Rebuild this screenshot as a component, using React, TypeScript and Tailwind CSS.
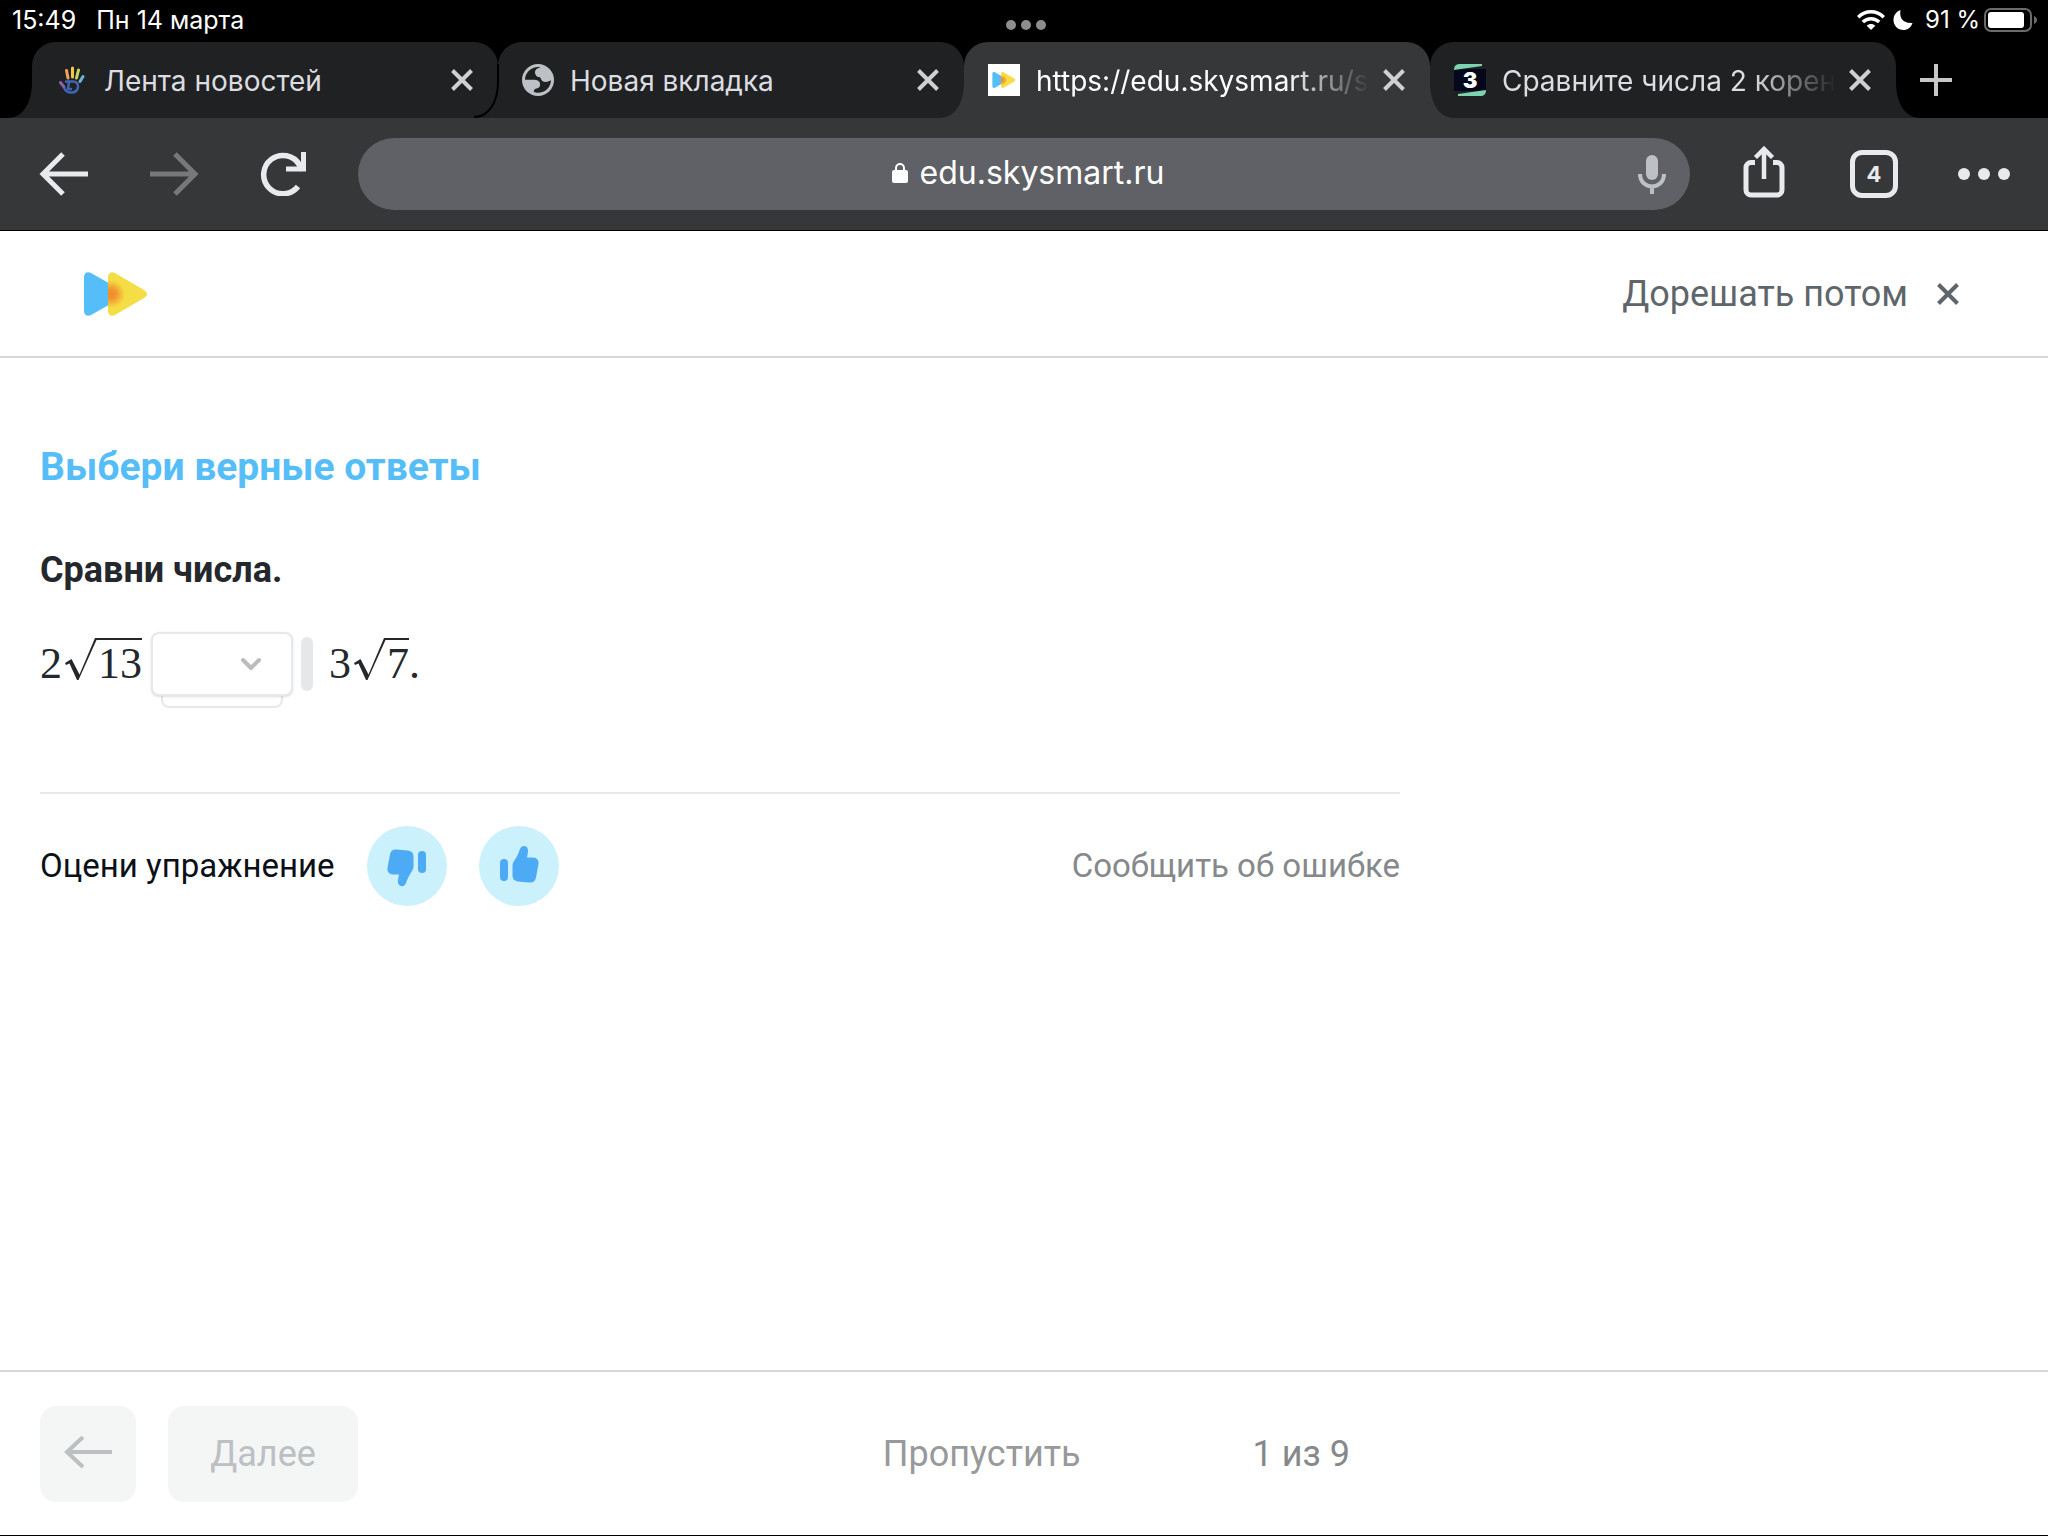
import { useState } from 'react';
import type { ReactNode } from 'react';

type Tab = {
    title: string;
    icon: ReactNode;
    fade?: boolean;
};

// Play logo, two overlapping rounded triangles
function SkyLogo({ className, id }: { className: string; id: string }) {
    return (
        <svg className={className} viewBox="0 0 64 44" aria-hidden="true">
            <defs>
                <radialGradient id={id} gradientUnits="userSpaceOnUse" cx="27" cy="22" r="14">
                    <stop offset="0" stopColor="#f08a2c" />
                    <stop offset="0.35" stopColor="#f2952f" />
                    <stop offset="1" stopColor="#f5dd45" />
                </radialGradient>
            </defs>
            <path d="M0 5C0 1 3.500-1 7 1L38 18.500C41 20 41 24 38 25.500L7 43C3.500 45 0 43 0 39Z" fill="#55bdf8" />
            <path d="M24 5C24 1 27.500-1 31 1L60 18C64 20.500 64 23.500 60 26L31 43C27.500 45 24 43 24 39Z" fill={`url(#${id})`} />
        </svg>
    );
}

function HandIcon() {
    return (
        <svg className="size-8 shrink-0" viewBox="0 0 32 32" fill="none" strokeLinecap="round" aria-hidden="true">
            <path d="M12 14L10.500 6.500" stroke="#f0a35a" strokeWidth="3" />
            <path d="M16.500 13L16.500 4" stroke="#f3c74b" strokeWidth="3" />
            <path d="M20.500 14L22.500 6" stroke="#c6d860" strokeWidth="3" />
            <path d="M24 17.500L27 12.500" stroke="#6fb4d8" strokeWidth="3" />
            <path d="M8 23L4.500 18.500" stroke="#8d5fa8" strokeWidth="3" />
            <path d="M10 17.500H17C20.500 17.500 22.500 20 22 23C21.500 26.500 19 28.500 15.500 28.500C12 28.500 9.500 27 8.500 24.500" stroke="#3f66b5" strokeWidth="2.500" />
            <path d="M13 18L12 25H15" stroke="#3f66b5" strokeWidth="2.500" />
        </svg>
    );
}

function GlobeIcon() {
    return (
        <svg className="size-8 shrink-0" viewBox="0 0 32 32" aria-hidden="true">
            <circle cx="16" cy="16" r="16" fill="#bdc1c6" />
            <path d="M18.500 3.300C17 4 14.500 4.500 13.500 6.500C12.500 8.500 13 10 14.500 12C16 13.500 18.500 12.500 19 14.500C19.500 17 21.500 18.200 24.500 17.800C26.500 17.600 27.500 16.500 29 16C29 23.200 23.200 28.800 16 28.800C14.500 28.800 13 28.500 12 28C11.500 26.500 12 25 14.500 24.500C17 24 18.500 22.500 18 19.500C17.500 16.500 14.500 15.500 11.500 15.800H3C3 8.800 9 3 16 3C17 3 17.800 3.100 18.500 3.300Z" fill="#202123" />
            <path d="M14.500 5.500C13 7 13 10 15 12C17 13.500 18.500 12.500 19 14.500C19.500 16.500 21.500 17.500 24.500 17.500C26.500 17.500 28 16.500 29 16C29 10 25 5 19.500 3.500Z" fill="#bdc1c6" />
        </svg>
    );
}

function ZnanijaIcon() {
    return (
        <span className="relative flex size-8 shrink-0 items-center justify-center">
            <svg className="absolute inset-0 size-8" viewBox="0 0 32 32" aria-hidden="true">
                <path d="M0 5H32V27H0Z" fill="#05081a" />
                <path d="M0 6C0 2 2 0 6 0H28V2L0 6Z" fill="#7cd3b0" />
                <path d="M32 26C32 30 30 32 26 32H4V30L32 26Z" fill="#7cd3b0" />
            </svg>
            <span className="relative text-[22px] leading-none font-black text-white">3</span>
        </span>
    );
}

function CloseIcon() {
    return (
        <svg className="size-6" viewBox="0 0 24 24" fill="none" stroke="currentColor" strokeWidth="4" aria-hidden="true">
            <path d="M2.500 2.500L21.500 21.500M21.500 2.500L2.500 21.500" />
        </svg>
    );
}

// Concave foot that joins a tab to the toolbar
function Foot({ side, className }: { side: 'left' | 'right'; className: string }) {
    return (
        <svg
            className={`absolute bottom-0 h-9 w-6 overflow-visible ${side === 'left' ? '-left-6' : '-right-6 -scale-x-100'} ${className}`}
            viewBox="0 0 24 36"
            aria-hidden="true"
        >
            <path d="M24 0C24 22 14 36 0 36H24Z" stroke="none" />
            <path d="M24 -18V0C24 21 14 35 0 35" fill="none" strokeWidth="2" />
        </svg>
    );
}

const tabs: Tab[] = [
    { title: 'Лента новостей', icon: <HandIcon /> },
    { title: 'Новая вкладка', icon: <GlobeIcon /> },
    {
        title: 'https://edu.skysmart.ru/s',
        icon: (
            <span className="flex size-8 shrink-0 items-center justify-center bg-white">
                <SkyLogo id="tab-logo" className="h-4 w-6" />
            </span>
        ),
        fade: true,
    },
    { title: 'Сравните числа 2 корен', icon: <ZnanijaIcon />, fade: true },
];

function StatusBar() {
    return (
        <div className="grid h-[42px] grid-cols-3 items-start pr-2 pl-3 text-2xl leading-10 text-white">
            <div className="flex gap-5 text-[25px] leading-10">
                <span>15:49</span>
                <span>Пн 14 марта</span>
            </div>
            <div className="flex justify-center gap-[5px] pt-5">
                <span className="size-2.5 rounded-full bg-[#8e8e8e]" />
                <span className="size-2.5 rounded-full bg-[#8e8e8e]" />
                <span className="size-2.5 rounded-full bg-[#8e8e8e]" />
            </div>
            <div className="flex h-10 items-center justify-end">
                <svg className="mr-2 h-5 w-7" viewBox="0 0 28 20" fill="none" stroke="#fff" strokeWidth="3.500" aria-label="Wi-Fi">
                    <path d="M1.200 7.200C8.500 0 19.500 0 26.800 7.200" />
                    <path d="M5.800 12C10.500 7.500 17.500 7.500 22.200 12" />
                    <path d="M14 20L9.700 15.700C12 13.500 16 13.500 18.300 15.700Z" fill="#fff" stroke="none" />
                </svg>
                <svg className="mr-3 size-5" viewBox="0 0 20 20" fill="#fff" aria-label="Не беспокоить">
                    <path d="M7.500 0C6.500 6 8 13.500 19.500 13C18 17.500 14.500 20 10.500 20C5 20 0.500 16 0.500 10C0.500 5.500 3 1.500 7.500 0Z" />
                </svg>
                <span>91 %</span>
                <svg className="ml-1 h-6 w-14" viewBox="0 0 56 24" aria-hidden="true">
                    <rect x="1" y="1" width="46" height="22" rx="6" fill="none" stroke="#6b6b6b" strokeWidth="2" />
                    <rect x="4" y="4" width="36" height="16" rx="3" fill="#fff" />
                    <path d="M50 8C54 9.500 54 14.500 50 16Z" fill="#6b6b6b" />
                </svg>
            </div>
        </div>
    );
}

function TabStrip() {
    const [active, setActive] = useState<number>(2);

    return (
        <div className="flex h-[76px] pl-8">
            {tabs.map((tab, i) => {
                const isActive = i === active;
                return (
                    <div
                        key={tab.title}
                        className={`relative flex min-w-0 flex-1 items-center gap-3 rounded-t-3xl px-6
                            ${isActive ? 'z-10 bg-[#363739] text-white' : 'bg-[#202123] text-[#dcdde0]'}`}
                    >
                        {(isActive || i < active) && (
                            <Foot
                                side="left"
                                className={isActive ? 'fill-[#363739]' : i === 0 ? 'fill-[#202123]' : 'fill-[#202123] stroke-black'}
                            />
                        )}
                        {(isActive || i > active) && (
                            <Foot side="right" className={isActive ? 'fill-[#363739]' : 'fill-[#202123]'} />
                        )}
                        <button
                            type="button"
                            onClick={() => setActive(i)}
                            className="flex min-w-0 flex-1 items-center gap-4 text-left text-[28px] leading-10"
                        >
                            {tab.icon}
                            <span
                                className={`flex-1 pt-0.5 whitespace-nowrap
                                    ${tab.fade ? 'mask-r-from-75% mask-r-to-100%' : ''}`}
                            >
                                {tab.title}
                            </span>
                        </button>
                        <button type="button" aria-label="Закрыть вкладку" className="text-[#cfd0d2]">
                            <CloseIcon />
                        </button>
                    </div>
                );
            })}
            <div className="flex w-[152px] shrink-0 items-center pl-6">
                <button type="button" aria-label="Новая вкладка">
                    <svg className="size-8" viewBox="0 0 32 32" stroke="#c6c7c9" strokeWidth="4" aria-hidden="true">
                        <path d="M16 0V32M0 16H32" />
                    </svg>
                </button>
            </div>
        </div>
    );
}

function Toolbar() {
    return (
        <div className="flex h-28 items-center bg-[#363739] px-9 text-[#e8eaed]">
            <div className="flex w-[322px] shrink-0 items-center gap-[54px]">
                <button type="button" aria-label="Назад">
                    <svg className="h-11 w-14" viewBox="0 0 56 44" fill="none" stroke="currentColor" strokeWidth="5" aria-hidden="true">
                        <path d="M52 22H8M27 2L7 22L27 42" />
                    </svg>
                </button>
                <button type="button" aria-label="Вперёд" disabled className="text-[#77787a]">
                    <svg className="h-11 w-14" viewBox="0 0 56 44" fill="none" stroke="currentColor" strokeWidth="5" aria-hidden="true">
                        <path d="M4 22H48M29 2L49 22L29 42" />
                    </svg>
                </button>
                <button type="button" aria-label="Обновить">
                    <svg className="h-11 w-[52px]" viewBox="0 0 52 44" fill="none" stroke="currentColor" strokeWidth="5.500" aria-hidden="true">
                        <path d="M42 34.500A19.200 19.200 0 1 1 43.500 13L46.500 18" />
                        <path d="M47.500 0V17H30" strokeWidth="5" />
                    </svg>
                </button>
            </div>
            <div className="relative flex h-18 min-w-0 flex-1 items-center justify-center rounded-full bg-[#5f6166]">
                <button type="button" className="flex items-center gap-3 pb-0.5 pl-2 text-[32px] leading-10 text-white">
                    <svg className="h-5 w-4" viewBox="0 0 16 20" aria-hidden="true">
                        <path d="M4 9V5A4 4 0 0 1 12 5V9" fill="none" stroke="#fff" strokeWidth="2" />
                        <rect x="0" y="7" width="16" height="13" rx="2" fill="#fff" />
                    </svg>
                    edu.skysmart.ru
                </button>
                <button type="button" aria-label="Голосовой поиск" className="absolute right-6">
                    <svg className="h-10 w-7" viewBox="0 0 28 40" fill="none" aria-hidden="true">
                        <rect x="8" y="1" width="12" height="25" rx="6" fill="#bdc1c6" />
                        <path d="M2 20C2 36.500 26 36.500 26 20M14 32V40" stroke="#bdc1c6" strokeWidth="4" />
                    </svg>
                </button>
            </div>
            <div className="flex w-[322px] shrink-0 items-center justify-end gap-[60px]">
                <button type="button" aria-label="Поделиться">
                    <svg className="h-14 w-[50px]" viewBox="0 3 50 56" fill="none" stroke="currentColor" strokeWidth="5" aria-hidden="true">
                        <path d="M15 19.500H11A5 5 0 0 0 6 24.500V47A5 5 0 0 0 11 52H37A5 5 0 0 0 42 47V24.500A5 5 0 0 0 37 19.500H33" />
                        <path d="M24 36V6M15.500 14.500L24 6L32.500 14.500" strokeWidth="4.500" />
                    </svg>
                </button>
                <button
                    type="button"
                    aria-label="Открытые вкладки"
                    className="flex size-12 items-center justify-center rounded-xl border-[5px] border-[#e8eaed] text-[22px] font-bold"
                >
                    4
                </button>
                <button type="button" aria-label="Меню" className="flex gap-2 pr-0.5">
                    <span className="size-3 rounded-full bg-[#e8eaed]" />
                    <span className="size-3 rounded-full bg-[#e8eaed]" />
                    <span className="size-3 rounded-full bg-[#e8eaed]" />
                </button>
            </div>
        </div>
    );
}

// Radical sign with the line over its content
function Root({ children }: { children: string }) {
    return (
        <span className="flex items-start pb-[3px]">
            <svg className="h-11 w-9" viewBox="0 0 36 44" aria-hidden="true">
                <path d="M3 26L9.500 22L17.500 37.500L33 1H36V3H34.500L16.500 43H15L7.500 26.500L4 28Z" fill="#24282c" />
            </svg>
            <span className="mt-px border-t-2 border-[#24282c] leading-12">{children}</span>
        </span>
    );
}

function ThumbUp({ className }: { className?: string }) {
    return (
        <svg className={`h-11 w-10 ${className ?? ''}`} viewBox="0 0 40 44" fill="#4dabf5" aria-hidden="true">
            <rect x="1" y="15" width="8" height="22" rx="4" />
            <path d="M21 5C22.500 0 30 1 29 8L28 13.500H34C38 13.500 40 16.500 39.500 20L37 33.500C36.500 37 34 39 30 38.500L19 37.500C15.500 37 13.500 35 13.500 32V22C13.500 20 14 18.500 15 17C17.500 13.500 19.500 9.500 21 5Z" />
        </svg>
    );
}

function Exercise() {
    const [answer, setAnswer] = useState<string>('');

    return (
        <main className="flex-1 px-10 pt-[85px] text-[#24282c]">
            <div className="max-w-[1360px]">
                <h1 className="text-[39px] leading-12 font-bold text-[#55bdf8]">Выбери верные ответы</h1>
                <h2 className="mt-[55px] text-4xl leading-12 font-bold">Сравни числа.</h2>

                {/* Comparison row */}
                <div className="mt-[30px] flex h-20 items-center font-['Liberation_Serif',serif] text-[44px] leading-12">
                    <span>2</span>
                    <Root>13</Root>
                    <div className="relative ml-[9px] h-16 w-[142px]">
                        <span className="absolute inset-x-2.5 top-10 -bottom-3 rounded-lg border-2 border-[#e7e8e9]" />
                        <select
                            aria-label="Знак сравнения"
                            value={answer}
                            onChange={(e) => setAnswer(e.target.value)}
                            className="relative block h-full w-full appearance-none rounded-lg border-2 border-[#e7e8e9] bg-white px-5 text-3xl shadow-sm"
                        >
                            <option value=""></option>
                            <option value="lt">&lt;</option>
                            <option value="gt">&gt;</option>
                            <option value="eq">=</option>
                        </select>
                        <svg
                            className="pointer-events-none absolute top-6 right-8 h-4 w-5"
                            viewBox="0 0 20 16"
                            fill="none"
                            stroke="#bcbcbc"
                            strokeWidth="4"
                            strokeLinecap="round"
                            strokeLinejoin="round"
                            aria-hidden="true"
                        >
                            <path d="M2 4L10 12L18 4" />
                        </svg>
                    </div>
                    <span className="mr-4 ml-2 h-[54px] w-3 rounded-full bg-[#e5e7e9]" />
                    <span>3</span>
                    <Root>7</Root>
                    <span>.</span>
                </div>

                {/* Feedback */}
                <div className="mt-22 flex items-center justify-between border-t-2 border-[#e7e8e9] pt-8 text-[33px] leading-10">
                    <div className="flex items-center gap-8">
                        <span className="text-[#0b1117]">Оцени упражнение</span>
                        <button type="button" aria-label="Не нравится" className="flex size-20 items-center justify-center rounded-full bg-[#cbf1fc]">
                            <ThumbUp className="rotate-180" />
                        </button>
                        <button type="button" aria-label="Нравится" className="flex size-20 items-center justify-center rounded-full bg-[#cbf1fc]">
                            <ThumbUp />
                        </button>
                    </div>
                    <a href="#report" className="text-[#85898b]">Сообщить об ошибке</a>
                </div>
            </div>
        </main>
    );
}

function App() {
    return (
        <div className="flex min-h-screen flex-col bg-white font-[Roboto,sans-serif]">
            <header className="border-b border-black bg-black font-[Inter,sans-serif]">
                <StatusBar />
                <TabStrip />
                <Toolbar />
            </header>

            <div className="flex h-[127px] shrink-0 items-center justify-between border-b-2 border-[#d6d7d7] pr-[88px] pl-[84px]">
                <a href="#home" aria-label="Skysmart">
                    <SkyLogo id="page-logo" className="h-11 w-16" />
                </a>
                <button type="button" className="flex items-center gap-7 text-4xl leading-12 text-[#5e666b]">
                    Дорешать потом
                    <CloseIcon />
                </button>
            </div>

            <Exercise />

            <footer className="border-t-2 border-b border-t-[#d6d7d7] border-b-black px-10 pt-[34px] pb-[33px] text-4xl leading-12">
                <div className="flex max-w-[1360px] items-center gap-8 pr-[50px]">
                    <button type="button" aria-label="Назад" disabled className="flex size-24 items-center justify-center rounded-2xl bg-[#f4f6f6]">
                        <svg className="h-9 w-12" viewBox="0 2 48 36" fill="none" stroke="#bcc0c2" strokeWidth="4" aria-hidden="true">
                            <path d="M48 18H3M19 3L3 18L19 33" />
                        </svg>
                    </button>
                    <button type="button" disabled className="h-24 w-[190px] rounded-2xl bg-[#f4f6f6] text-[#bcc0c2]">
                        Далее
                    </button>
                    <button type="button" className="mr-[140px] ml-auto text-[#97999a]">Пропустить</button>
                    <span className="text-[#85898b]">1 из 9</span>
                </div>
            </footer>
        </div>
    );
}

export default App;
